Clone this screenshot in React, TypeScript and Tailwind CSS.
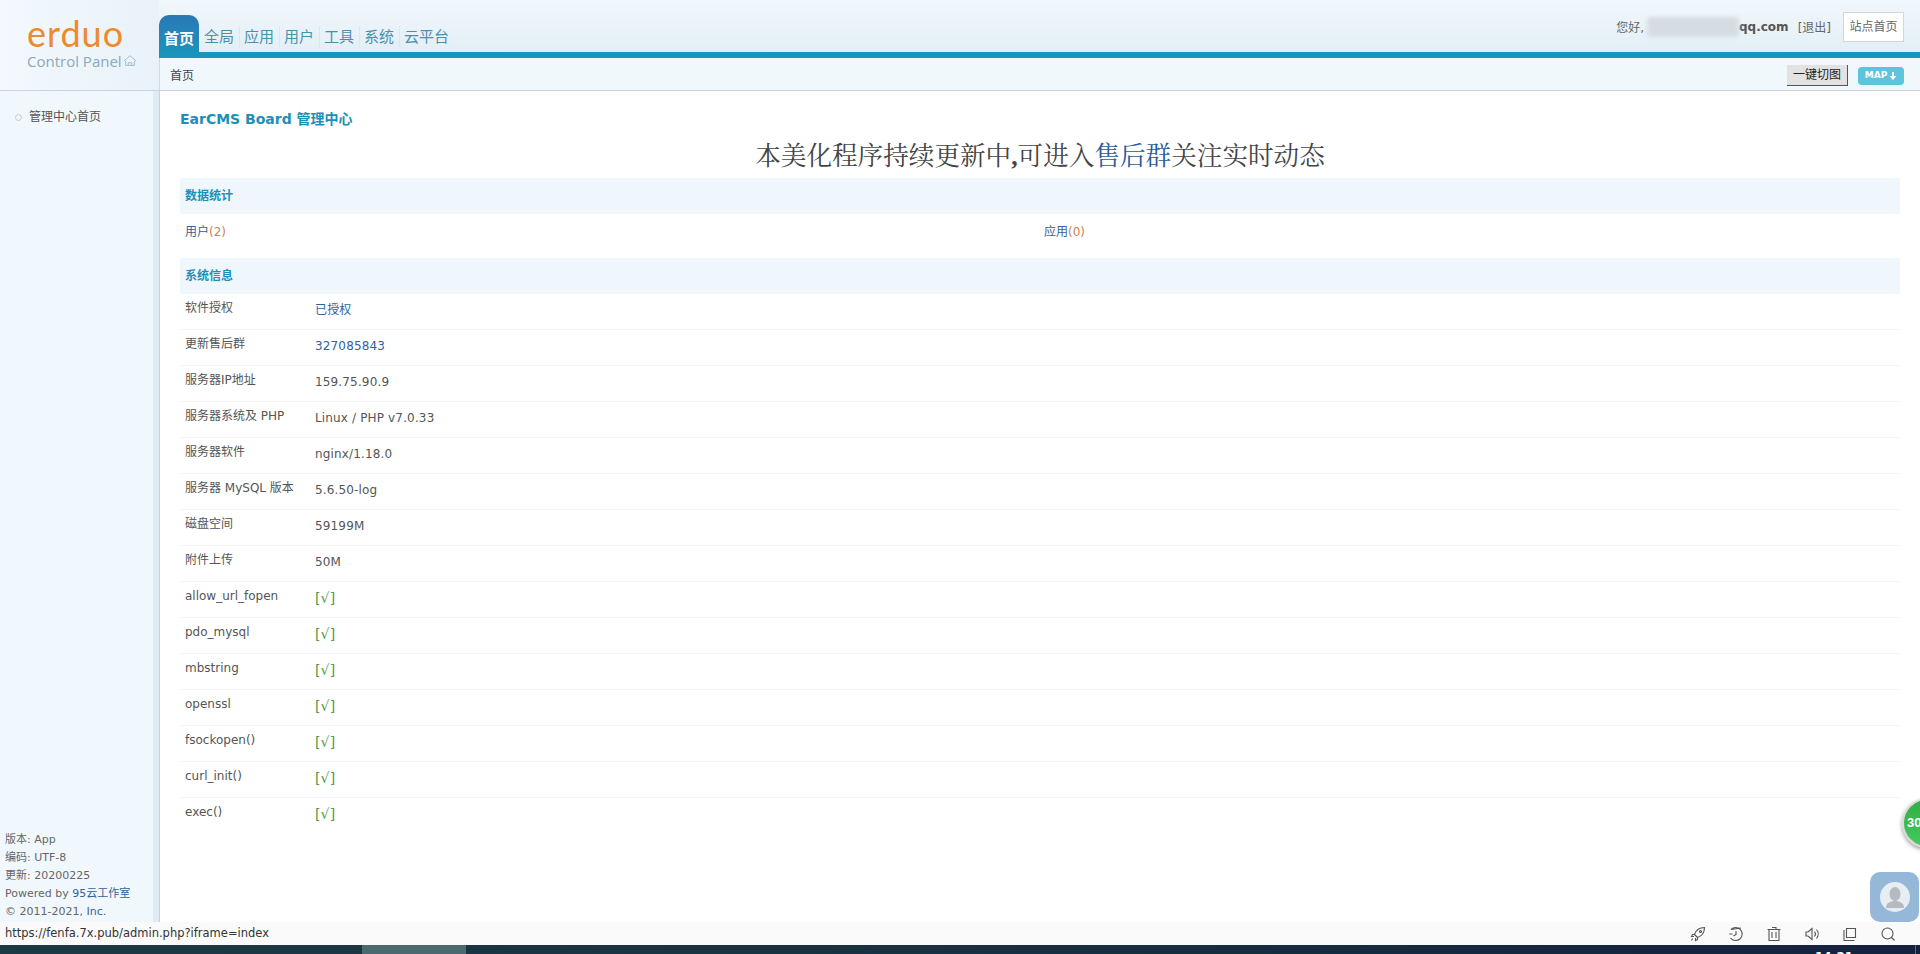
import React from "react";

const sans = "font-['DejaVu_Sans','Noto_Sans_CJK_SC',sans-serif]";

function Row({ label, last, children }: { label: string; last?: boolean; children: React.ReactNode }) {
  return (
    <div className={`flex h-[36px] text-[12px] text-[#555] ${last ? "" : "border-b border-[#f2f5f7]"}`}>
      <div className="w-[135px] pl-[5px] pt-[4px] leading-[20px]">{label}</div>
      <div className="pt-[6px] leading-[20px] tracking-[0.15px]">{children}</div>
    </div>
  );
}

const Check = () => <span className="text-[14px] text-[#4c9a4c]">[√]</span>;

function SectionHead({ children }: { children: React.ReactNode }) {
  return (
    <div className="h-[36px] bg-[#eff7fc] pl-[5px] text-[12px] font-bold leading-[37px] text-[#1c8fb8]">{children}</div>
  );
}

const checks = ["allow_url_fopen", "pdo_mysql", "mbstring", "openssl", "fsockopen()", "curl_init()", "exec()"];

export default function App() {
  return (
    <div className={`${sans} relative flex h-[954px] w-[1920px] flex-col overflow-hidden bg-white text-[12px] text-[#555]`}>
      <header className="flex h-[91px] shrink-0 border-b border-[#c9d5dc] bg-[#eef6fb]">
        <div className="w-[159px] shrink-0 bg-gradient-to-r from-[#f3f9fd] to-[#e8f2f9] pl-[27px] pt-[13px]">
          <div className="font-['Lato',sans-serif] text-[36px] font-normal leading-[40px] tracking-[1px] text-[#ee8a2c]">erduo</div>
          <div className="flex items-center font-['Open_Sans',sans-serif] text-[15px] leading-[16px] text-[#8ba8bd]">
            Control Panel
            <svg viewBox="0 0 16 16" className="ml-[1px] h-[14px] w-[14px]" fill="none" stroke="#9bb3c4" strokeWidth="1">
              <path d="M1 8 8 2l7 6M3 8v5h10V8M6 13v-3h4v3" />
            </svg>
          </div>
        </div>
        <div className="flex min-w-0 flex-1 flex-col">
          <div className="flex h-[58px] justify-between border-b-[6px] border-[#1796bd] bg-gradient-to-b from-[#f1f8fc] to-[#e3eef6]">
            <nav className="flex items-end pt-[15px]">
              <div className="-mb-[6px] flex h-[43px] w-[40px] items-center justify-center rounded-t-[10px] bg-gradient-to-b from-[#2a78b4] to-[#1796bd] pt-[5px] text-[15px] font-bold text-white">首页</div>
              <div className="flex h-[37px] items-center pt-[7px] text-[15px] text-[#4a90ad]">
                {["全局", "应用", "用户", "工具", "系统", "云平台"].map((t, i) => (
                  <span key={t} className={`pr-[5px] ${i > 0 ? "border-l border-[#dbe6ee] pl-[4px]" : "pl-[5px]"}`}>{t}</span>
                ))}
              </div>
            </nav>
            <div className="flex items-start pr-[16px] pt-[12px]">
              <span className="pt-[7px] text-[12px] text-[#666]">您好,</span>
              <span className="relative w-[95px]">
                <span className="absolute left-[3px] top-[5px] h-[20px] w-[92px] rounded-[3px] bg-[#d5dde3] blur-[2px]"></span>
              </span>
              <span className="pt-[6px] text-[12px] font-bold text-[#555]">qq.com</span>
              <span className="ml-[9px] pt-[7px] text-[12px] text-[#666]">[退出]</span>
              <span className="ml-[12px] flex h-[30px] w-[61px] items-center justify-center border border-[#cfd8de] bg-white text-[12px] text-[#666]">站点首页</span>
            </div>
          </div>
          <div className="flex h-[32px] items-center justify-between border-l border-[#c9dbe8] bg-[#f0f8fc] pl-[10px] pr-[16px] pt-[3px] text-[12px] text-[#444]">
            <span>首页</span>
            <div className="flex items-center gap-[10px]">
              <span className="flex h-[21px] w-[61px] items-center justify-center border-b border-r border-[#555] bg-[#e2e2e2] text-[12px] text-[#222]">一键切图</span>
              <span className="flex h-[18px] w-[46px] items-center justify-center gap-[2px] rounded-[4px] bg-[#5ec3dc] text-[9px] font-bold leading-none text-white">
                MAP
                <svg viewBox="0 0 8 8" className="h-[8px] w-[8px]" fill="white"><path d="M3 0h2v4h2.500L4 8 .5 4H3z" /></svg>
              </span>
            </div>
          </div>
        </div>
      </header>

      <div className="flex min-h-0 flex-1">
        <aside className="flex w-[159px] shrink-0 flex-col justify-between border-r-[6px] border-[#dfecf6] bg-[#f1f8fd] shadow-[1px_0_0_#bcd4e6]">
          <div className="flex items-center pl-[15px] pt-[16px] text-[12px] leading-[20px] text-[#555]">
            <span className="mr-[7px] h-[7px] w-[7px] rounded-full border border-[#c2ccd3]"></span>
            管理中心首页
          </div>
          <div className="pb-[1px] pl-[5px] text-[11px] leading-[18px] text-[#666]">
            <div>版本: App</div>
            <div>编码: UTF-8</div>
            <div>更新: 20200225</div>
            <div>Powered by <span className="text-[#33629c]">95云工作室</span></div>
            <div>© 2011-2021, <span className="text-[#33629c]">Inc.</span></div>
          </div>
        </aside>
        <main className="ml-[1px] min-w-0 flex-1 px-[20px]">
          <div className="pt-[18px] text-[14px] font-bold leading-[20px] text-[#1c8fb8]">EarCMS Board 管理中心</div>
          <h1 className="h-[49px] pt-[6px] text-center font-['Liberation_Serif','Noto_Serif_CJK_SC','Noto_Sans_CJK_SC',serif] text-[25.6px] font-normal leading-[43px] text-[#444]">
            本美化程序持续更新中<b>,</b>可进入<span className="text-[#2a5a9c]">售后群</span>关注实时动态
          </h1>
          <div>
            <SectionHead>数据统计</SectionHead>
            <div className="flex h-[44px] pl-[5px] pt-[8px] text-[12px] leading-[20px]">
              <div className="w-[859px] text-[#33629c]">用户<span className="text-[#c9835a]">(2)</span></div>
              <div className="text-[#33629c]">应用<span className="text-[#c9835a]">(0)</span></div>
            </div>
            <SectionHead>系统信息</SectionHead>
            <Row label="软件授权"><span className="text-[#33629c]">已授权</span></Row>
            <Row label="更新售后群"><span className="text-[#33629c]">327085843</span></Row>
            <Row label="服务器IP地址">159.75.90.9</Row>
            <Row label="服务器系统及 PHP">Linux / PHP v7.0.33</Row>
            <Row label="服务器软件">nginx/1.18.0</Row>
            <Row label="服务器 MySQL 版本">5.6.50-log</Row>
            <Row label="磁盘空间">59199M</Row>
            <Row label="附件上传">50M</Row>
            {checks.map((l, i) => (
              <Row key={l} label={l} last={i === checks.length - 1}><Check /></Row>
            ))}
          </div>
        </main>
      </div>

      <footer className="flex h-[23px] shrink-0 items-center justify-between bg-[#fafafa] pl-[5px] pr-[24px] text-[11.500px] text-[#333]">
        <span>https://fenfa.7x.pub/admin.php?iframe=index</span>
        <div className="flex items-center gap-[22px]">
          <svg viewBox="0 0 16 16" className="h-[16px] w-[16px]" fill="none" stroke="#555" strokeWidth="1.100"><path d="M6 10 4.500 8.500C6 4 9 1.500 14.500 1.500 14.500 7 12 10 7.500 11.500zM4.500 8.500H2.500L1.500 10.500H4M7.500 11.500v2L5.500 14.500V12M2.500 12.500l-1 2" /><circle cx="10.500" cy="5.500" r="1" /></svg>
          <svg viewBox="0 0 16 16" className="h-[16px] w-[16px]" fill="none" stroke="#555" strokeWidth="1.100"><path d="M3 3.500A6.500 6.500 0 1 1 2.500 12M3 3.500 13 2M8 5v3.500L5.500 10M1.500 8h3" /></svg>
          <svg viewBox="0 0 16 16" className="h-[16px] w-[16px]" fill="none" stroke="#555" strokeWidth="1.100"><path d="M1.500 3.500h13M3 3.500v11h10v-11M6 1.500h4v2M6 6v6M10 6v6" /></svg>
          <svg viewBox="0 0 16 16" className="h-[16px] w-[16px]" fill="none" stroke="#555" strokeWidth="1.100"><path d="M2 6v4h2l4 3.500v-11L4 6zM10.500 5.500a4 4 0 0 1 0 5M12.500 3.500a7 7 0 0 1 0 9" /></svg>
          <svg viewBox="0 0 16 16" className="h-[16px] w-[16px]" fill="none" stroke="#555" strokeWidth="1.100"><path d="M4.500 2.500h9v9h-9zM2 4v10.500h10.500" /></svg>
          <svg viewBox="0 0 16 16" className="h-[16px] w-[16px]" fill="none" stroke="#555" strokeWidth="1.100"><circle cx="7.500" cy="7.500" r="5.500" /><path d="m11.500 11.500 3 3" /></svg>
        </div>
      </footer>
      <div className="relative h-[9px] shrink-0 overflow-hidden bg-gradient-to-r from-[#1c3a44] via-[#18303f] to-[#14213f]">
        <div className="absolute bottom-0 left-[362px] top-0 w-[104px] bg-[#4a6a6e]"></div>
        <span className="absolute left-[1815px] top-[5px] text-[12px] font-bold leading-[14px] text-white">14:21</span>
        <div className="absolute bottom-0 left-[1915px] top-0 w-px bg-[#5a6a80]"></div>
      </div>

      <div className="absolute left-[1902px] top-[798px] flex h-[50px] w-[50px] items-center rounded-full border-2 border-[#d8dcd8] bg-gradient-to-b from-[#2fae47] to-[#45c95c] pl-[3px] font-['Liberation_Sans',sans-serif] text-[13px] font-bold text-white shadow-[0_2px_4px_rgba(0,0,0,0.4)]">30</div>
      <div className="absolute left-[1870px] top-[872px] flex h-[50px] w-[49px] items-center justify-center rounded-[10px] bg-[#95b8d8]">
        <div className="flex h-[30px] w-[30px] items-center justify-center overflow-hidden rounded-full bg-[#e6eef4]">
          <svg viewBox="0 0 30 30" className="h-[30px] w-[30px]" fill="#b4bac0"><ellipse cx="15" cy="12" rx="5.500" ry="7" /><path d="M6 26c0-5 4-7 9-7s9 2 9 7z" /></svg>
        </div>
      </div>
    </div>
  );
}
